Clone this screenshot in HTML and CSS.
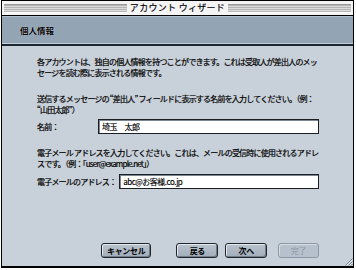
FILE: index.html
```html
<!DOCTYPE html>
<html lang="ja">
<head>
<meta charset="utf-8">
<link rel="stylesheet" href="styles.css">
</head>
<body>
<div class="window">
  <div class="titlebar">
    <div class="stripes"></div>
    <div class="title">アカウント ウィザード</div>
    <div class="stripes"></div>
  </div>
  <div class="header">個人情報</div>
  <div class="content">
    <p class="para">各アカウントは、独自の個人情報を持つことができます。これは受取人が差出人のメッ<br>セージを読む際に表示される情報です。</p>
    <p class="para p2">送信するメッセージの “差出人” フィールドに表示する名前を入力してください。（例：<br>“山田太郎”）</p>
    <div class="row r1">
      <span class="label name-label">名前：</span>
      <div class="field name-field">埼玉　太郎</div>
    </div>
    <p class="para p3">電子メール アドレスを入力してください。これは、メールの受信時に使用されるアドレ<br>スです。（例：「user@example.net」）</p>
    <div class="row r2">
      <span class="label">電子メールのアドレス：</span>
      <div class="field mail-field">abc@お客様.co.jp</div>
    </div>
    <div class="buttons">
      <div class="btn cancel">キャンセル</div>
      <div class="btn back">戻る</div>
      <div class="btn next">次へ</div>
      <div class="btn done disabled">完了</div>
    </div>
    <svg class="grip" width="8" height="8" viewBox="0 0 8 8">
      <path d="M7.5 0.5 L0.5 7.5 M7.5 3.5 L3.5 7.5 M7.5 6 L6 7.5" stroke="#6b7684" stroke-width="1" fill="none"/>
      <path d="M7.5 1.5 L1.5 7.5 M7.5 4.5 L4.5 7.5" stroke="#f2f4f6" stroke-width="1" fill="none"/>
    </svg>
  </div>
</div>
</body>
</html>
```

FILE: styles.css
```css
* { box-sizing: border-box; }
html, body { margin: 0; padding: 0; background: #ffffff; }
body {
  width: 356px;
  height: 270px;
  font-family: "Noto Sans CJK JP", "Noto Sans", sans-serif;
  font-size: 8px;
  color: #000;
}
.window {
  width: 353px;
  height: 268px;
  margin-left: 1px;
  border: 1px solid #000;
  display: flex;
  flex-direction: column;
  background: #fff;
}
.titlebar {
  height: 15px;
  flex: none;
  display: flex;
  align-items: center;
  gap: 3px;
  padding: 0 2px;
  border-bottom: 1px solid #000;
  background: #f4f4f4;
}
.stripes {
  flex: 1;
  height: 9px;
  background: repeating-linear-gradient(to bottom, #b4b4b4 0 1px, #dcdcdc 1px 2px);
  border-top: 1px solid #9a9a9a;
  border-bottom: 1px solid #ffffff;
}
.title {
  font-size: 9px;
  line-height: 14px;
  letter-spacing: 0.3px;
  color: #000;
  -webkit-text-stroke: 0.15px #000;
}
.header {
  flex: none;
  height: 30px;
  background: #93a4b5;
  border-bottom: 2px solid #1d2733;
  box-shadow: inset 0 -1px 0 #c3d0dc, inset 0 1px 0 #b2c1d0;
  padding-left: 18px;
  font-weight: bold;
  font-size: 8.5px;
  line-height: 28px;
  color: #000;
  text-shadow: 0 0 1px #e6ecf2;
}
.content {
  flex: 1;
  position: relative;
  background: #c8d0d9;
  padding: 10px 34px 0 35px;
  display: flex;
  flex-direction: column;
  border-bottom: 1px solid #000;
}
.para {
  margin: 0;
  white-space: nowrap;
  line-height: 11px;
  letter-spacing: -0.8px;
  -webkit-text-stroke: 0.2px #000;
}
.p2 { margin-top: 15px; }
.p3 { margin-top: 13px; }
.row {
  display: flex;
  align-items: center;
  white-space: nowrap;
  letter-spacing: -0.8px;
}
.label { -webkit-text-stroke: 0.2px #000; }
.r1 { margin-top: 4px; }
.r2 { margin-top: 5px; }
.name-label { width: 61px; flex: none; }
.r2 .label { margin-right: 3px; }
.field {
  flex: 1;
  height: 15px;
  background: #fff;
  border: 1px solid #1b1f24;
  box-shadow: inset 1px 1px 0 #7c8690;
  padding-left: 3px;
  line-height: 13px;
  letter-spacing: -0.5px;
  -webkit-text-stroke: 0.15px #000;
}
.buttons {
  margin-top: auto;
  margin-bottom: 8px;
  display: flex;
  margin-left: 64px;
}
.btn {
  height: 15px;
  border: 1px solid #20262e;
  border-radius: 3px;
  background: linear-gradient(#b9c3ce, #a1adba);
  box-shadow: inset 1px 1px 0 #e2e8ee, inset -1px -1px 0 #6f7b88;
  font-weight: bold;
  font-size: 8px;
  line-height: 13px;
  text-align: center;
  letter-spacing: -0.3px;
}
.cancel { width: 58px; }
.back { width: 48px; margin-left: 25px; }
.next { width: 48px; margin-left: 7px; }
.done { width: 47px; margin-left: 11px; }
.disabled {
  border-color: #8a97a6;
  background: #b7c1cc;
  box-shadow: inset 1px 1px 0 #d6dde4;
  color: #8a97a6;
  font-weight: normal;
}
.grip {
  position: absolute;
  right: 0;
  bottom: 0;
}
```
